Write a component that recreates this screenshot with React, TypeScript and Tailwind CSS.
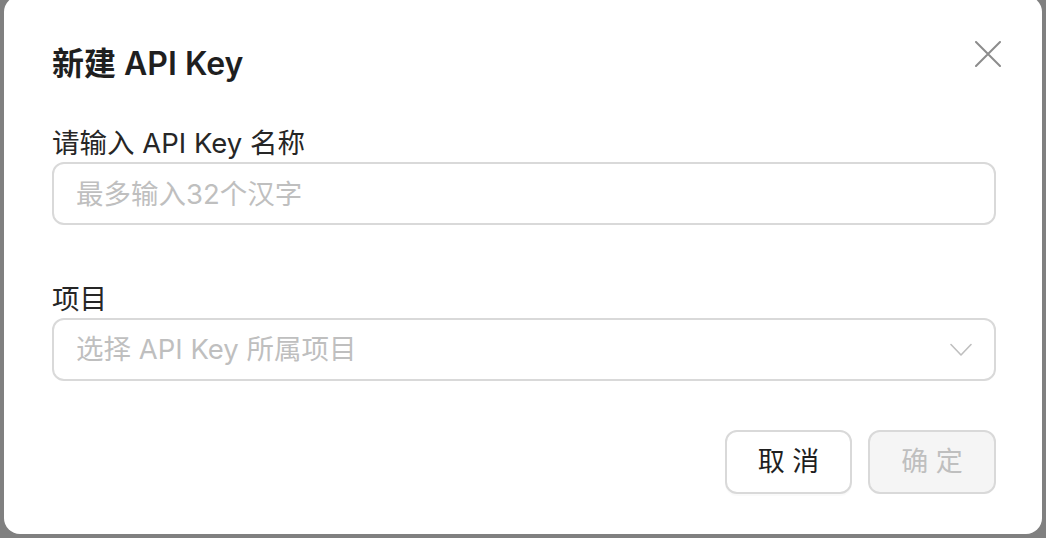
import { useState } from 'react';

const font = 'font-["Inter","Noto_Sans_CJK_SC",sans-serif]';

const CloseIcon = () => (
  <svg width="26" height="26" viewBox="0 0 26 26" fill="none">
    <path d="M1 1L25 25M25 1L1 25" stroke="#8c8c8c" strokeWidth="2" strokeLinecap="round" />
  </svg>
);

const ChevronDown = () => (
  <svg width="22" height="14" viewBox="0 0 22 14" fill="none">
    <path d="M1 1.5L11 12L21 1.5" stroke="#bfbfbf" strokeWidth="1.6" strokeLinecap="round" strokeLinejoin="round" />
  </svg>
);

const App = () => {
  const [name, setName] = useState('');

  return (
    <div className={`h-[538px] w-[1046px] overflow-hidden bg-[#808080] px-1 ${font}`}>
      <div className="relative -mt-1 flex h-[538px] flex-col rounded-2xl bg-white pl-[48px] pr-[46px] pt-[48px]">
        <button className="absolute right-[41px] top-[45px] flex h-[26px] w-[26px] items-center justify-center">
          <CloseIcon />
        </button>

        <h2 className="h-[40px] text-[32px] font-semibold leading-[40px] text-[#1f1f1f]">新建 API Key</h2>

        <label className="mt-[43px] mb-[3px] text-[27.5px] leading-[32px] text-[#262626]">请输入 API Key 名称</label>
        <input
          value={name}
          onChange={(e) => setName(e.target.value)}
          placeholder="最多输入32个汉字"
          className="h-[63px] w-full rounded-[12px] border-2 border-[#d9d9d9] px-[22px] text-[27.5px] text-[#262626] outline-none placeholder:text-[#bfbfbf]"
        />

        <label className="mt-[58px] mb-[3px] text-[27.5px] leading-[32px] text-[#262626]">项目</label>
        <div className="flex h-[63px] w-full items-center justify-between rounded-[12px] border-2 border-[#d9d9d9] pl-[22px] pr-[22px]">
          <span className="text-[27.5px] text-[#bfbfbf]">选择 API Key 所属项目</span>
          <ChevronDown />
        </div>

        <div className="mt-[49px] flex justify-end gap-4">
          <button className="flex h-[64px] w-[127px] items-center justify-center rounded-[12px] border-2 border-[#d9d9d9] bg-white text-[27px] text-[#1f1f1f] shadow-[0_2px_0_rgba(0,0,0,0.02)]">
            取 消
          </button>
          <button
            disabled
            className="flex h-[64px] w-[128px] items-center justify-center rounded-[12px] border-2 border-[#d9d9d9] bg-[#f5f5f5] text-[27px] text-[#bfbfbf]"
          >
            确 定
          </button>
        </div>
      </div>
    </div>
  );
};

export default App;
